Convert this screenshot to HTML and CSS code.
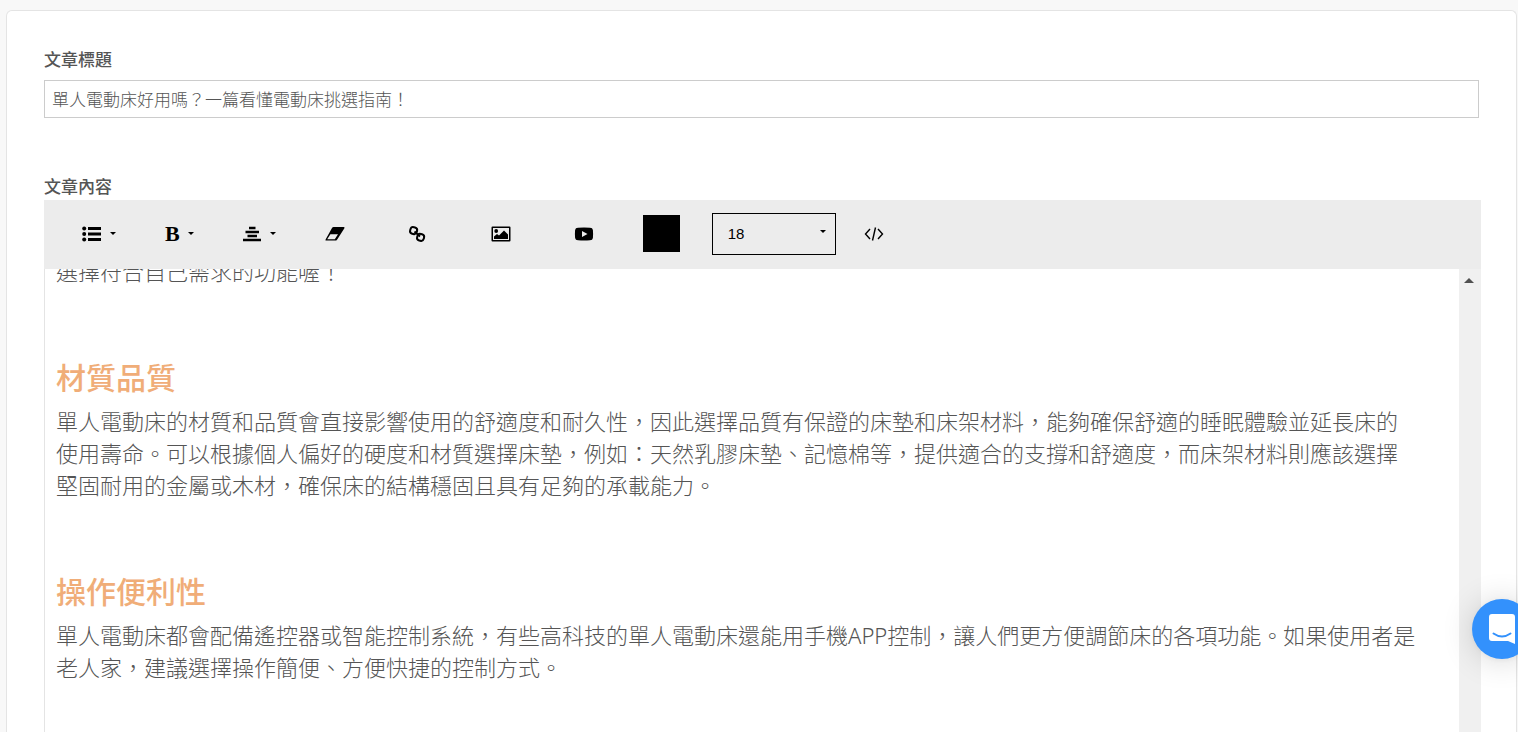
FILE: index.html
```
<!DOCTYPE html>
<html lang="zh-Hant">
<head>
    <meta charset="utf-8">
    <title>文章編輯</title>
    <link rel="stylesheet" href="styles.css">
</head>
<body>
    <main class="card">
        <div class="field">
            <label for="title">文章標題</label>
            <input type="text" id="title" class="title-input" value="單人電動床好用嗎？一篇看懂電動床挑選指南！">
        </div>

        <div class="field-label" id="content-label">文章內容</div>
        <div class="editor">
            <div class="toolbar">
                <div class="menus">
                    <button type="button" class="tool" aria-label="清單">
                        <svg width="20" height="16" viewBox="0 0 20 16"><circle cx="2.2" cy="2.5" r="2"/><circle cx="2.2" cy="8" r="2"/><circle cx="2.2" cy="13.5" r="2"/><path d="M6 1h13v3H6zM6 6.500h13v3H6zM6 12h13v3H6z"/></svg>
                        <span class="caret"></span>
                    </button>
                    <button type="button" class="tool" aria-label="文字樣式">
                        <span class="bold">B</span>
                        <span class="caret"></span>
                    </button>
                    <button type="button" class="tool" aria-label="對齊">
                        <svg width="19" height="16" viewBox="0 0 19 16"><path d="M6 .8h6.500v2.400H6zM2.500 4.800h13.500v2.400H2.500zM4.500 8.800h9.500v2.400H4.500zM0 12.800h18v2.400H0z"/></svg>
                        <span class="caret"></span>
                    </button>
                </div>
                <div class="icons">
                    <button type="button" class="tool" aria-label="清除格式">
                        <svg width="20" height="16" viewBox="0 0 20 16"><path fill-rule="evenodd" d="M8.600 1h10q1.400 0 .8 1.200l-7.200 11.200q-.8 1.200-2 1.200H1.400Q0 14.600.600 13.400L7 2q.600-1 1.600-1zM5.400 8.300L2.200 13.300h7.600l3.200-5z"/></svg>
                    </button>
                    <button type="button" class="tool" aria-label="連結">
                        <svg width="20" height="18" viewBox="0 0 20 18" fill="none" stroke="#000" stroke-width="2"><rect x="2.200" y="2.200" width="6.800" height="6.800" rx="2.800" transform="rotate(15 5.600 5.600)"/><rect x="9.200" y="9" width="6.800" height="6.800" rx="2.800" transform="rotate(15 12.600 12.400)"/><path d="M6.500 6.500l5.500 5"/></svg>
                    </button>
                    <button type="button" class="tool" aria-label="圖片">
                        <svg width="20" height="16" viewBox="0 0 20 16"><path fill-rule="evenodd" d="M1.500.500h17q1 0 1 1v13q0 1-1 1h-17q-1 0-1-1v-13q0-1 1-1zM2 2v12h16V2z"/><circle cx="5.200" cy="5" r="1.900"/><path d="M3 13v-2.500l3-2.500 2 1.500L13 4.500l4 4V13z"/></svg>
                    </button>
                    <button type="button" class="tool" aria-label="影片">
                        <svg width="20" height="16" viewBox="0 0 20 16"><path fill-rule="evenodd" d="M4 1.700q6-.6 12 0 2.600.1 2.900 2.300.4 4 0 8-.3 2.200-2.900 2.300-6 .6-12 0Q1.400 14.200 1.100 12q-.4-4 0-8Q1.400 1.800 4 1.700zM8 5v6l5.500-3z"/></svg>
                    </button>
                </div>
                <div class="format">
                    <button type="button" class="swatch" aria-label="文字顏色"></button>
                    <div class="size">
                        <select aria-label="字級">
                            <option>14</option>
                            <option>16</option>
                            <option selected>18</option>
                            <option>24</option>
                        </select>
                        <span class="caret"></span>
                    </div>
                    <button type="button" class="tool source" aria-label="原始碼">
                        <svg width="20" height="16" viewBox="0 0 20 16" fill="none" stroke="#000" stroke-width="1.400"><path d="M6 3L1.500 8 6 13M14 3l4.500 5L14 13M11.500 1.500l-3 13"/></svg>
                    </button>
                </div>
            </div>
            <div class="pane">
                <article class="content" contenteditable="true" spellcheck="false" aria-labelledby="content-label">
                    <p>選擇符合自己需求的功能喔！</p>
                    <h2>材質品質</h2>
                    <p>單人電動床的材質和品質會直接影響使用的舒適度和耐久性，因此選擇品質有保證的床墊和床架材料，能夠確保舒適的睡眠體驗並延長床的使用壽命。可以根據個人偏好的硬度和材質選擇床墊，例如：天然乳膠床墊、記憶棉等，提供適合的支撐和舒適度，而床架材料則應該選擇堅固耐用的金屬或木材，確保床的結構穩固且具有足夠的承載能力。</p>
                    <h2>操作便利性</h2>
                    <p>單人電動床都會配備遙控器或智能控制系統，有些高科技的單人電動床還能用手機APP控制，讓人們更方便調節床的各項功能。如果使用者是老人家，建議選擇操作簡便、方便快捷的控制方式。</p>
                </article>
                <div class="scrollbar">
                    <svg width="10" height="5" viewBox="0 0 10 5"><path d="M5 0l5 5H0z"/></svg>
                </div>
            </div>
        </div>
    </main>

    <button type="button" class="chat" aria-label="客服">
        <svg width="28" height="32" viewBox="0 0 28 32"><path fill="#fff" d="M4 1h20q3 0 3 3v27l-7-3H4q-3 0-3-3V4q0-3 3-3z"/><path fill="none" stroke="#3391fc" stroke-width="2" stroke-linecap="round" d="M5.500 20.500q8.500 6 17 0"/></svg>
    </button>
</body>
</html>
```
FILE: styles.css
```
* {
    box-sizing: border-box;
}
body {
    display: flex;
    height: 100vh;
    margin: 0;
    padding: 10px 1px 0 6px;
    overflow: hidden;
    background: #f8f8f8;
    color: #555;
    font-family: "Noto Sans", "Noto Sans CJK TC", sans-serif;
}
button {
    padding: 0;
    border: none;
    background: none;
    cursor: pointer;
}
svg {
    display: block;
}
.card {
    display: flex;
    flex-direction: column;
    flex: 1;
    min-width: 0;
    padding: 36px 37px 0;
    border: 1px solid #e4e4e4;
    border-bottom: none;
    border-radius: 6px 6px 0 0;
    background: #fff;
}
.field {
    margin-bottom: 56px;
}
.field label,
.field-label {
    display: block;
    padding-bottom: 7px;
    font-size: 17px;
    line-height: 26px;
    font-weight: 500;
}
.field-label {
    padding-bottom: 0;
}
.title-input {
    display: block;
    width: 100%;
    height: 38px;
    padding: 0 7px 2px;
    border: 1px solid #ccc;
    color: #555;
    font-family: inherit;
    font-size: 17px;
    font-weight: 300;
}

/* editor */
.editor {
    display: flex;
    flex-direction: column;
    flex: 1;
    min-height: 0;
    margin-right: -2px;
}
.toolbar {
    display: flex;
    flex-shrink: 0;
    align-items: center;
    gap: 49px;
    height: 69px;
    padding: 0 0 2px 38px;
    background: #ececec;
}
.menus {
    display: flex;
    gap: 49px;
}
.icons {
    display: flex;
    gap: 63px;
}
.format {
    display: flex;
    align-items: center;
    gap: 32px;
}
.tool {
    display: flex;
    align-items: center;
    gap: 8px;
    height: 24px;
}
.source {
    margin-left: -4px;
}
.bold {
    font-family: "Liberation Serif", serif;
    font-size: 22px;
    font-weight: bold;
    line-height: 24px;
}
.caret {
    border: 3px solid transparent;
    border-top-color: #000;
    border-bottom: none;
}
.swatch {
    width: 37px;
    height: 37px;
    background: #000;
}
.size {
    position: relative;
}
.size select {
    display: block;
    width: 124px;
    height: 42px;
    padding: 0 15px;
    border: 1px solid #000;
    border-radius: 0;
    appearance: none;
    background: transparent;
    color: #000;
    font-family: "Liberation Sans", sans-serif;
    font-size: 15px;
}
.size .caret {
    position: absolute;
    top: 17px;
    right: 10px;
    pointer-events: none;
}
.pane {
    display: flex;
    flex: 1;
    min-height: 0;
    overflow: hidden;
    border-left: 1px solid #e4e4e4;
}
.content {
    flex: 1;
    margin-top: -14px;
    padding: 0 40px 0 11px;
    outline: none;
    font-size: 22px;
    font-weight: 300;
    line-height: 32px;
}
.content p {
    margin: 0;
}
.content h2 {
    margin: 69px 0 5px;
    color: #f0ad78;
    font-size: 30px;
    font-weight: 500;
    line-height: 44px;
}
.scrollbar {
    display: flex;
    justify-content: center;
    width: 22px;
    padding: 9px 2px 0 0;
    background: #f0f0f0;
    fill: #505050;
}

/* chat launcher, hangs over the window edge */
.chat {
    position: fixed;
    right: -14px;
    bottom: 73px;
    width: 60px;
    height: 60px;
    padding-left: 16px;
    border-radius: 50%;
    background: #3391fc;
    box-shadow: 0 2px 32px rgba(0, 0, 0, 0.16), 0 1px 6px rgba(0, 0, 0, 0.06);
}
```
